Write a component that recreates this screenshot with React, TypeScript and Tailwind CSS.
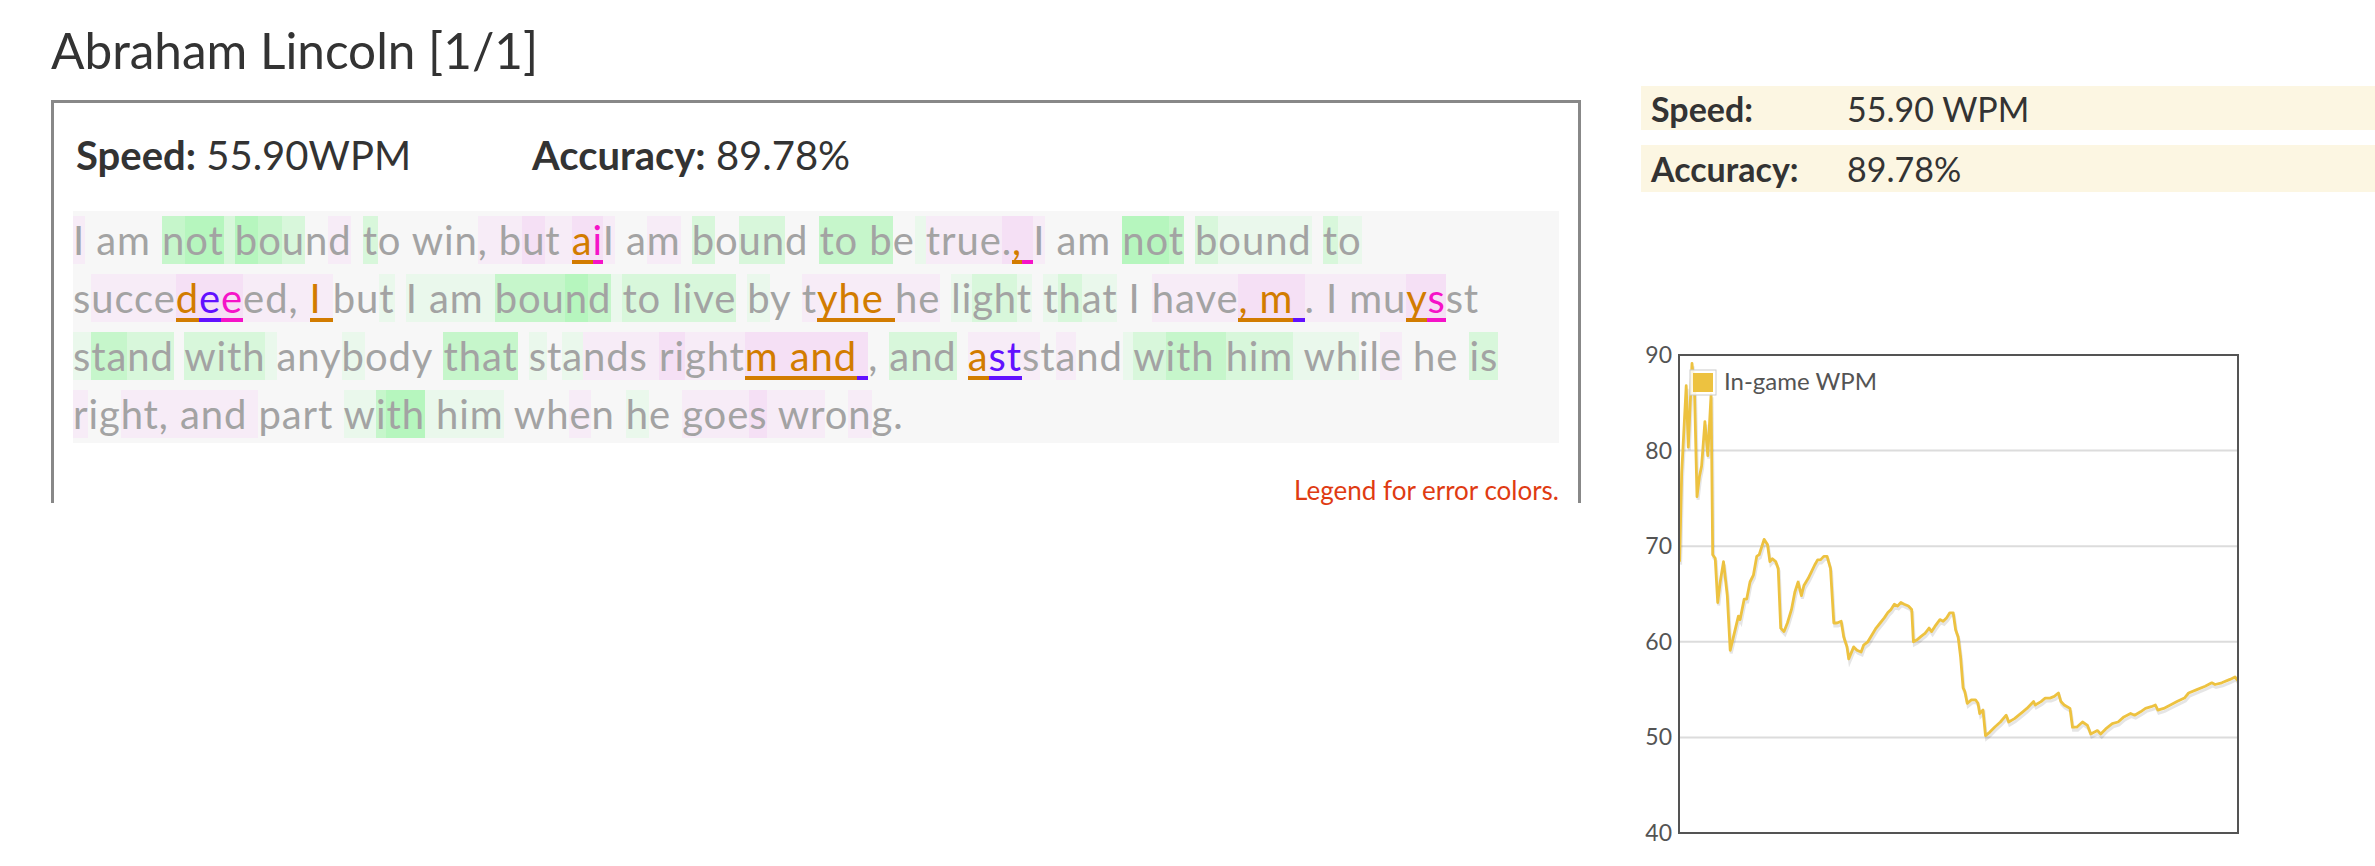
import React from "react";

type Seg = [string, string?, string?];

const BG: Record<string, string> = {
  l: "bg-[#eaf8ec]",
  g: "bg-[#d8f7db]",
  G: "bg-[#c6f6cb]",
  H: "bg-[#b6f6be]",
  p: "bg-[#f7ecf7]",
  P: "bg-[#f5e0f5]",
};

const ERR: Record<string, string> = {
  o: "text-[#d27c00] shadow-[inset_0_-4px_0_#d27c00]",
  m: "text-[#f513c8] shadow-[inset_0_-4px_0_#f513c8]",
  u: "text-[#6210ff] shadow-[inset_0_-4px_0_#6210ff]",
};

const lines: Seg[][] = [
  [
    ["I", "p"], [" am "], ["n", "G"], ["ot", "H"], [" ", "g"], ["b", "H"], ["o", "G"], ["u", "g"], ["n"], ["d", "p"],
    [" "], ["t", "g"], ["o win"], [", b", "p"], ["u", "P"], ["t", "p"], [" ", "p"], ["a", "P", "o"], ["i", "P", "m"],
    ["I", "p"], [" a"], ["m", "p"], [" "], ["b", "g"], ["o"], ["un", "g"], ["d "], ["to b", "G"], ["e"], [" ", "l"],
    ["true", "p"], [".", "P"], [",", "P", "o"], [" ", "P", "m"], ["I", "p"], [" am "], ["no", "H"], ["t", "G"], [" "],
    ["b", "g"], ["ound", "l"], [" "], ["t", "g"], ["o", "l"],
  ],
  [
    ["s"], ["ucce", "p"], ["d", "P", "o"], ["e", "P", "u"], ["e", "P", "m"], ["ed,", "p"], [" ", "p"], ["I", "p", "o"],
    [" ", "p", "o"], ["bu"], ["t", "l"], [" "], ["I am ", "l"], ["bou", "G"], ["n", "H"], ["d", "G"], [" ", "l"],
    ["to", "g"], [" live", "g"], [" "], ["b", "l"], ["y "], ["t", "p"], ["yhe ", "p", "o"], ["he", "p"], [" "],
    ["li", "l"], ["gh", "g"], ["t", "l"], [" "], ["t", "l"], ["h", "g"], ["at", "l"], [" I "], ["have", "p"],
    [", m", "P", "o"], [" ", "P", "u"], [".", "p"], [" I mu", "p"], ["y", "P", "o"], ["s", "P", "m"], ["st"],
  ],
  [
    ["s", "l"], ["ta", "G"], ["nd", "g"], [" "], ["with", "g"], [" ", "l"], ["any"], ["b", "l"], ["ody "],
    ["that", "G"], [" "], ["s", "l"], ["t"], ["a", "l"], ["nds", "p"], [" ", "p"], ["ri", "P"], ["ght", "p"],
    ["m and", "P", "o"], [" ", "P", "u"], [", "], ["and", "g"], [" "], ["a", "p", "o"], ["st", "p", "u"],
    ["s", "p"], ["t"], ["a", "p"], ["nd"], [" ", "l"], ["w", "g"], ["ith ", "G"], ["him", "g"], [" wh", "l"],
    ["il"], ["e", "p"], [" he "], ["is", "g"],
  ],
  [
    ["r", "p"], ["ig"], ["ht,", "p"], [" and ", "p"], ["par"], ["t "], ["w", "l"], ["i", "G"], ["th", "H"],
    [" him", "l"], [" wh"], ["e", "p"], ["n "], ["h", "l"], ["e "], ["goe", "p"], ["s", "P"], [" ", "p"],
    ["wr", "p"], ["o"], ["n", "p"], ["g."],
  ],
];

// wpm trace, traced from the original chart (x: 190..1540, y: 75 = 90wpm .. 1475 = 40wpm)
const RAW = [
  192, 680, 197, 420, 208, 165, 213, 345, 222, 100, 228, 180, 234, 490, 240, 430, 245, 400, 253, 270, 260, 370,
  268, 190, 272, 660, 278, 670, 284, 800, 290, 740, 298, 680, 307, 780, 314, 940, 322, 900, 334, 840, 338, 850,
  348, 790, 354, 790, 362, 740, 370, 720, 378, 665, 384, 660, 396, 615, 404, 630, 410, 680, 416, 672, 424, 680,
  430, 700, 436, 875, 444, 885, 452, 860, 462, 820, 470, 770, 478, 740, 486, 780, 492, 750, 502, 730, 510, 710,
  518, 690, 525, 675, 532, 675, 540, 665, 548, 665, 556, 700, 564, 860, 572, 860, 582, 855, 588, 900, 596, 930,
  600, 965, 612, 930, 620, 940, 630, 945, 636, 925, 646, 915, 656, 895, 666, 875, 676, 860, 686, 845, 694, 830,
  702, 820, 710, 805, 718, 810, 726, 800, 734, 805, 744, 810, 752, 820, 756, 915, 764, 910, 774, 900, 784, 890,
  794, 875, 800, 885, 808, 870, 820, 850, 828, 855, 836, 845, 844, 830, 852, 830, 858, 880, 864, 900, 870, 960,
  876, 1050, 880, 1060, 886, 1095, 896, 1085, 906, 1085, 912, 1095, 916, 1125, 924, 1115, 930, 1190, 940, 1180,
  952, 1165, 966, 1150, 980, 1130, 986, 1150, 1000, 1140, 1020, 1120, 1030, 1110, 1046, 1090, 1050, 1100,
  1064, 1090, 1074, 1080, 1086, 1080, 1096, 1075, 1106, 1065, 1112, 1090, 1120, 1100, 1134, 1110, 1140, 1165,
  1150, 1165, 1164, 1150, 1176, 1160, 1184, 1185, 1200, 1175, 1208, 1185, 1220, 1170, 1236, 1155, 1250, 1150,
  1264, 1135, 1280, 1125, 1290, 1130, 1304, 1120, 1316, 1110, 1330, 1105, 1340, 1100, 1346, 1115, 1360, 1110,
  1376, 1100, 1392, 1090, 1410, 1080, 1420, 1065, 1440, 1055, 1460, 1045, 1476, 1035, 1484, 1040, 1500, 1035,
  1520, 1025, 1532, 1018, 1540, 1030,
];

const points = (() => {
  const out: string[] = [];
  for (let i = 0; i < RAW.length; i += 2) {
    const x = 1600 + RAW[i] * 0.4145 - 1641;
    const y = 15 + ((RAW[i + 1] - 75) / 1400) * 478;
    out.push(`${x.toFixed(1)},${y.toFixed(1)}`);
  }
  return out.join(" ");
})();

function WpmChart() {
  const left = 38;
  const right = 597;
  const top = 15;
  const bottom = 493;
  const ticks = [90, 80, 70, 60, 50, 40];
  const yOf = (v: number) => top + ((90 - v) / 50) * (bottom - top);

  return (
    <svg width={609} height={510} className="block" fontFamily="Lato, sans-serif">
      <defs>
        <clipPath id="plot">
          <rect x={left} y={top} width={right - left} height={bottom - top} />
        </clipPath>
      </defs>
      {ticks.slice(1, -1).map((t) => (
        <line key={t} x1={left} x2={right} y1={yOf(t)} y2={yOf(t)} stroke="#dcdcdc" strokeWidth={2} />
      ))}
      {ticks.map((t) => (
        <text key={t} x={31} y={yOf(t) + 8} textAnchor="end" fontSize={23} fill="#545454">
          {t}
        </text>
      ))}
      <g clipPath="url(#plot)">
        <polyline points={points} fill="none" stroke="rgba(0,0,0,0.1)" strokeWidth={3} transform="translate(1,3)" />
        <polyline points={points} fill="none" stroke="#edc240" strokeWidth={2.8} strokeLinejoin="round" />
      </g>
      <rect x={left} y={top} width={right - left} height={bottom - top} fill="none" stroke="#545454" strokeWidth={2} />
      <rect x={49} y={30} width={26} height={25} fill="#fff" fillOpacity={0.85} stroke="#ccc" strokeWidth={1} />
      <rect x={52} y={33} width={20} height={19} fill="#edc240" />
      <text x={83} y={50} fontSize={24} fill="#545454">
        In-game WPM
      </text>
    </svg>
  );
}

export default function App() {
  return (
    <div className="flex min-h-[866px] bg-white pl-[51px] font-['Lato','Noto_Sans',sans-serif] text-[#333]">
      <div className="w-[1530px] shrink-0">
        <h1 className="pt-[20px] text-[49.5px] leading-[60px] font-normal">Abraham Lincoln [1/1]</h1>
        <div className="mt-[20px] border-x-[3px] border-t-[3px] border-[#888] px-[19px] pt-[29px]">
          <div className="flex pl-[3px] text-[40px] leading-[46px]">
            <div className="w-[456px]">
              <span className="font-bold">Speed:</span> 55.90WPM
            </div>
            <div>
              <span className="font-bold">Accuracy:</span> 89.78%
            </div>
          </div>
          <div className="mt-[33px] bg-[#f7f7f7] text-[40px] leading-[58px] tracking-[0.9px] text-[#a3a3a3]">
            {lines.map((line, i) => (
              <div key={i} className="whitespace-pre">
                {line.map(([text, bg, err], j) => (
                  <span key={j} className={`${bg ? BG[bg] : ""} ${err ? ERR[err] : ""}`}>
                    {text}
                  </span>
                ))}
              </div>
            ))}
          </div>
          <div className="mt-[34px] text-right text-[26px] leading-[26px] text-[#df3b12]">Legend for error colors.</div>
        </div>
      </div>
      <div className="ml-[60px] flex-1 pt-[86px]">
        <div className="flex h-[44px] items-center bg-[#fcf6e2] pl-[10px] text-[34px]">
          <span className="w-[196px] font-bold">Speed:</span>
          <span>55.90 WPM</span>
        </div>
        <div className="mt-[15px] flex h-[47px] items-center bg-[#fcf6e2] pl-[10px] text-[34px]">
          <span className="w-[196px] font-bold">Accuracy:</span>
          <span>89.78%</span>
        </div>
        <div className="mt-[148px]">
          <WpmChart />
        </div>
      </div>
    </div>
  );
}
